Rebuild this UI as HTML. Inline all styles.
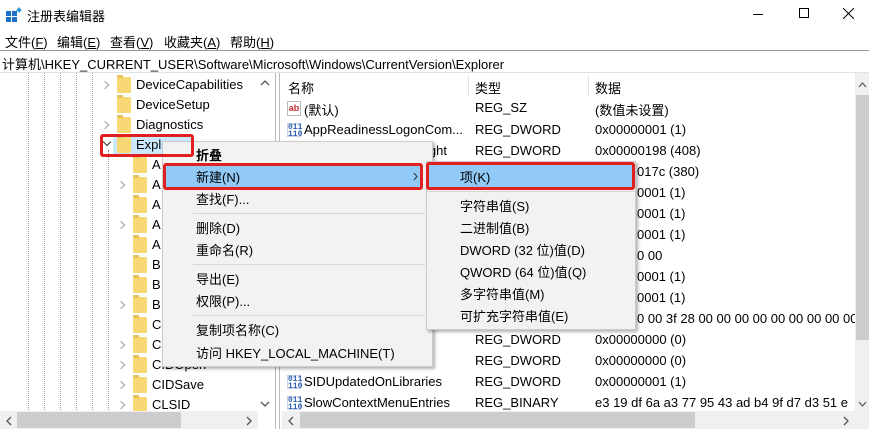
<!DOCTYPE html>
<html><head><meta charset="utf-8"><style>
*{margin:0;padding:0;box-sizing:border-box}
body{width:869px;height:429px;overflow:hidden;background:#fff;font-family:"Liberation Sans","Noto Sans CJK SC",sans-serif;font-size:13px;color:#000;position:relative}
.a{position:absolute;white-space:nowrap}
.f{position:absolute;width:14px;height:16px;background:#f8d775;border-radius:1px}
.f:before{content:"";position:absolute;left:0;top:-2px;width:6px;height:3px;background:#e8c25a}
.vl{position:absolute;top:73px;height:339px;border-left:1px dotted #9a9a9a;width:0}
.ar{position:absolute;width:6px;height:6px;border-right:1.3px solid #a0a0a0;border-bottom:1.3px solid #a0a0a0;transform:rotate(-45deg)}
.ic{position:absolute;width:14px;height:14px;font-size:8px;line-height:7px;color:#2d5fb0;font-weight:bold;font-family:"Liberation Mono",monospace;border:1px solid #c8d4e8;text-align:center;background:#fff}
.sep{position:absolute;height:1px;background:#d7d7d7}
</style></head><body>
<svg class="a" style="left:6px;top:7px" width="16" height="16"><rect x="0" y="4" width="5" height="5" fill="#1a73c7"/><rect x="6" y="4" width="5" height="5" fill="#1a73c7"/><rect x="0" y="10" width="5" height="5" fill="#1a73c7"/><rect x="6" y="10" width="5" height="5" fill="#1a73c7"/><rect x="11" y="1" width="4" height="4" fill="#3a9be0" transform="rotate(45 13 3)"/></svg>
<div class="a" style="left:27px;top:6px;font-size:13px">注册表编辑器</div>
<div class="a" style="left:753px;top:14px;width:10px;height:1px;background:#000"></div>
<div class="a" style="left:799px;top:8px;width:10px;height:10px;border:1px solid #000"></div>
<svg class="a" style="left:843px;top:8px" width="11" height="11"><path d="M0 0L11 11M11 0L0 11" stroke="#000" stroke-width="1"/></svg>
<div class="a" style="left:5px;top:32px">文件(<u>F</u>)</div>
<div class="a" style="left:57px;top:32px">编辑(<u>E</u>)</div>
<div class="a" style="left:110px;top:32px">查看(<u>V</u>)</div>
<div class="a" style="left:164px;top:32px">收藏夹(<u>A</u>)</div>
<div class="a" style="left:230px;top:32px">帮助(<u>H</u>)</div>
<div class="a" style="left:0;top:50px;width:869px;height:1px;background:#999"></div>
<div class="a" style="left:2px;top:54px">计算机\HKEY_CURRENT_USER\Software\Microsoft\Windows\CurrentVersion\Explorer</div>
<div class="a" style="left:0;top:72px;width:869px;height:1px;background:#e2e2e2"></div>
<div class="vl" style="left:28px"></div><div class="vl" style="left:44px"></div><div class="vl" style="left:60px"></div><div class="vl" style="left:76px"></div><div class="vl" style="left:92px"></div><div class="vl" style="left:108px;top:150px;height:262px"></div>
<div class="ar" style="left:102px;top:82px"></div>
<div class="ar" style="left:102px;top:122px"></div>
<div class="a" style="left:113px;top:136px;width:80px;height:18px;background:#cce8ff"></div>
<div class="ar" style="left:104px;top:139px;transform:rotate(45deg);border-color:#333"></div>
<div class="f" style="left:117px;top:77px"></div><div class="a" style="left:136px;top:77px">DeviceCapabilities</div>
<div class="f" style="left:117px;top:97px"></div><div class="a" style="left:136px;top:97px">DeviceSetup</div>
<div class="f" style="left:117px;top:117px"></div><div class="a" style="left:136px;top:117px">Diagnostics</div>
<div class="f" style="left:117px;top:137px"></div><div class="a" style="left:136px;top:137px">Expl</div>
<div class="f" style="left:133px;top:157px"></div><div class="a" style="left:152px;top:157px">A</div>
<div class="f" style="left:133px;top:177px"></div><div class="a" style="left:152px;top:177px">A</div>
<div class="f" style="left:133px;top:197px"></div><div class="a" style="left:152px;top:197px">A</div>
<div class="f" style="left:133px;top:217px"></div><div class="a" style="left:152px;top:217px">A</div>
<div class="f" style="left:133px;top:237px"></div><div class="a" style="left:152px;top:237px">A</div>
<div class="f" style="left:133px;top:257px"></div><div class="a" style="left:152px;top:257px">B</div>
<div class="f" style="left:133px;top:277px"></div><div class="a" style="left:152px;top:277px">B</div>
<div class="f" style="left:133px;top:297px"></div><div class="a" style="left:152px;top:297px">B</div>
<div class="f" style="left:133px;top:317px"></div><div class="a" style="left:152px;top:317px">C</div>
<div class="f" style="left:133px;top:337px"></div><div class="a" style="left:152px;top:337px">C</div>
<div class="f" style="left:133px;top:357px"></div><div class="a" style="left:152px;top:357px">CIDOpen</div>
<div class="f" style="left:133px;top:377px"></div><div class="a" style="left:152px;top:377px">CIDSave</div>
<div class="f" style="left:133px;top:397px"></div><div class="a" style="left:152px;top:397px">CLSID</div>
<div class="ar" style="left:118px;top:182px"></div><div class="ar" style="left:118px;top:222px"></div><div class="ar" style="left:118px;top:302px"></div><div class="ar" style="left:118px;top:342px"></div><div class="ar" style="left:118px;top:362px"></div><div class="ar" style="left:118px;top:382px"></div><div class="ar" style="left:118px;top:402px"></div>
<svg class="a" style="left:260px;top:80px" width="10" height="6"><path d="M1 5L5 1L9 5" stroke="#555" fill="none" stroke-width="1.3"/></svg>
<svg class="a" style="left:260px;top:401px" width="10" height="6"><path d="M1 1L5 5L9 1" stroke="#555" fill="none" stroke-width="1.3"/></svg>
<div class="a" style="left:0;top:411px;width:258px;height:18px;background:#f0f0f0"></div>
<div class="a" style="left:17px;top:412px;width:164px;height:16px;background:#cdcdcd"></div>
<svg class="a" style="left:6px;top:416px" width="6" height="10"><path d="M5 1L1 5L5 9" stroke="#555" fill="none" stroke-width="1.3"/></svg>
<svg class="a" style="left:246px;top:416px" width="6" height="10"><path d="M1 1L5 5L1 9" stroke="#555" fill="none" stroke-width="1.3"/></svg>
<div class="a" style="left:275px;top:73px;width:1px;height:356px;background:#bbb"></div>
<div class="a" style="left:279px;top:73px;width:1px;height:356px;background:#bbb"></div>
<div class="a" style="left:288px;top:78px">名称</div>
<div class="a" style="left:468px;top:76px;width:1px;height:20px;background:#e5e5e5"></div>
<div class="a" style="left:475px;top:78px">类型</div>
<div class="a" style="left:588px;top:76px;width:1px;height:20px;background:#e5e5e5"></div>
<div class="a" style="left:595px;top:78px">数据</div>
<div class="a" style="left:287px;top:101px;width:14px;height:15px;border:1px solid #bbb;color:#d03030;font-size:9px;font-weight:bold;line-height:12px;text-align:center">ab</div>
<div class="a" style="left:304px;top:100px">(默认)</div>
<div class="ic" style="left:287px;top:123px">011<br>110</div><div class="a" style="left:304px;top:122px">AppReadinessLogonCom...</div>
<div class="a" style="left:426px;top:143px">ight</div>
<div class="ic" style="left:287px;top:375px">011<br>110</div><div class="a" style="left:304px;top:374px">SIDUpdatedOnLibraries</div>
<div class="ic" style="left:287px;top:396px">011<br>110</div><div class="a" style="left:304px;top:395px">SlowContextMenuEntries</div>
<div class="a" style="left:475px;top:100px">REG_SZ</div><div class="a" style="left:595px;top:100px">(数值未设置)</div>
<div class="a" style="left:475px;top:122px">REG_DWORD</div><div class="a" style="left:595px;top:122px">0x00000001 (1)</div>
<div class="a" style="left:475px;top:143px">REG_DWORD</div><div class="a" style="left:595px;top:143px">0x00000198 (408)</div>
<div class="a" style="left:637px;top:164px">017c (380)</div>
<div class="a" style="left:637px;top:185px">0001 (1)</div>
<div class="a" style="left:637px;top:206px">0001 (1)</div>
<div class="a" style="left:637px;top:227px">0001 (1)</div>
<div class="a" style="left:637px;top:248px">0 00</div>
<div class="a" style="left:637px;top:269px">0001 (1)</div>
<div class="a" style="left:637px;top:290px">0001 (1)</div>
<div class="a" style="left:637px;top:311px;width:218px;overflow:hidden">0 00 3f 28 00 00 00 00 00 00 00 00 00</div>
<div class="a" style="left:475px;top:332px">REG_DWORD</div><div class="a" style="left:595px;top:332px">0x00000000 (0)</div>
<div class="a" style="left:475px;top:353px">REG_DWORD</div><div class="a" style="left:595px;top:353px">0x00000000 (0)</div>
<div class="a" style="left:475px;top:374px">REG_DWORD</div><div class="a" style="left:595px;top:374px">0x00000001 (1)</div>
<div class="a" style="left:475px;top:395px">REG_BINARY</div><div class="a" style="left:595px;top:395px;width:260px;overflow:hidden">e3 19 df 6a a3 77 95 43 ad b4 9f d7 d3 51 e</div>
<div class="a" style="left:855px;top:73px;width:14px;height:339px;background:#f0f0f0"></div>
<div class="a" style="left:856px;top:95px;width:13px;height:245px;background:#cdcdcd"></div>
<svg class="a" style="left:858px;top:82px" width="9" height="6"><path d="M1 5L4.5 1L8 5" stroke="#555" fill="none" stroke-width="1.2"/></svg>
<svg class="a" style="left:858px;top:401px" width="9" height="6"><path d="M1 1L4.5 5L8 1" stroke="#555" fill="none" stroke-width="1.2"/></svg>
<div class="a" style="left:282px;top:411px;width:587px;height:18px;background:#f0f0f0"></div>
<div class="a" style="left:300px;top:412px;width:395px;height:16px;background:#cdcdcd"></div>
<svg class="a" style="left:288px;top:416px" width="6" height="10"><path d="M5 1L1 5L5 9" stroke="#555" fill="none" stroke-width="1.3"/></svg>
<svg class="a" style="left:843px;top:416px" width="6" height="10"><path d="M1 1L5 5L1 9" stroke="#555" fill="none" stroke-width="1.3"/></svg>
<div class="a" style="left:162px;top:141px;width:271px;height:226px;background:#f2f2f2;border:1px solid #ccc;box-shadow:2px 2px 3px rgba(0,0,0,.3)"></div>
<div class="a" style="left:196px;top:145px;font-weight:bold">折叠</div>
<div class="a" style="left:164px;top:165px;width:258px;height:22px;background:#91c9f7"></div>
<div class="a" style="left:196px;top:167px">新建(N)</div>
<svg class="a" style="left:413px;top:172px" width="5" height="9"><path d="M1 1L4 4.5L1 8" stroke="#333" fill="none"/></svg>
<div class="a" style="left:196px;top:189px">查找(F)...</div>
<div class="sep" style="left:193px;top:213px;width:232px"></div>
<div class="a" style="left:196px;top:218px">删除(D)</div>
<div class="a" style="left:196px;top:240px">重命名(R)</div>
<div class="sep" style="left:193px;top:264px;width:232px"></div>
<div class="a" style="left:196px;top:269px">导出(E)</div>
<div class="a" style="left:196px;top:291px">权限(P)...</div>
<div class="sep" style="left:193px;top:315px;width:232px"></div>
<div class="a" style="left:196px;top:320px">复制项名称(C)</div>
<div class="a" style="left:196px;top:343px">访问 HKEY_LOCAL_MACHINE(T)</div>
<div class="a" style="left:426px;top:161px;width:210px;height:169px;background:#f2f2f2;border:1px solid #ccc;box-shadow:2px 2px 3px rgba(0,0,0,.3)"></div>
<div class="a" style="left:428px;top:164px;width:205px;height:23px;background:#91c9f7"></div>
<div class="a" style="left:460px;top:167px">项(K)</div>
<div class="sep" style="left:427px;top:191px;width:208px"></div>
<div class="a" style="left:460px;top:196px">字符串值(S)</div>
<div class="a" style="left:460px;top:218px">二进制值(B)</div>
<div class="a" style="left:460px;top:240px">DWORD (32 位)值(D)</div>
<div class="a" style="left:460px;top:262px">QWORD (64 位)值(Q)</div>
<div class="a" style="left:460px;top:284px">多字符串值(M)</div>
<div class="a" style="left:460px;top:306px">可扩充字符串值(E)</div>
<div class="a" style="left:100px;top:134px;width:94px;height:23px;border:3px solid #e02020;border-radius:3px"></div>
<div class="a" style="left:163px;top:163px;width:260px;height:27px;border:3px solid #e02020;border-radius:3px"></div>
<div class="a" style="left:426px;top:162px;width:209px;height:28px;border:3px solid #e02020;border-radius:3px"></div>
</body></html>
